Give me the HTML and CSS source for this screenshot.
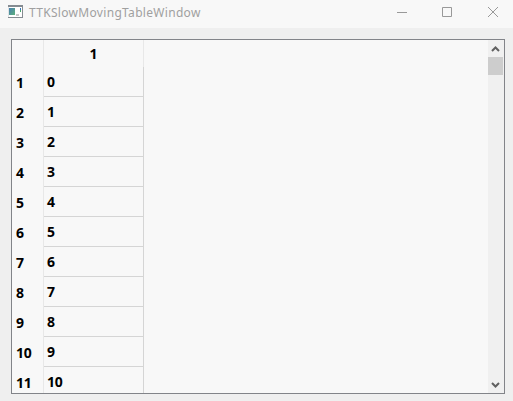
FILE: index.html
```
<!DOCTYPE html>
<html lang="en">
<head>
<meta charset="utf-8">
<title>TTKSlowMovingTableWindow</title>
<link rel="stylesheet" href="styles.css">
</head>
<body>
<header class="titlebar">
  <svg class="app-icon" width="15" height="13" viewBox="0 0 15 13">
    <defs><linearGradient id="g" x1="0" y1="0" x2="1" y2="1"><stop offset="0" stop-color="#4a7fb0"/><stop offset="1" stop-color="#5cb07c"/></linearGradient></defs>
    <path fill="#fff" d="M0 0h15v13H0z"/>
    <path fill="#858b91" d="M0 0h15v13H0v-1h14V2H0z"/>
    <path fill="#dfe3e6" d="M0 2h1v10H0z"/>
    <path fill="url(#g)" d="M1 3h6v7H1z"/>
    <path fill="#c8c8c8" d="M8 9h3v2H8z"/>
    <path fill="#3979b8" d="M12 3h1v2h-1z"/>
    <path fill="#48a56d" d="M12 5h1v2h-1z"/>
  </svg>
  <span class="title">TTKSlowMovingTableWindow</span>
  <svg class="control" width="45" height="28" viewBox="0 0 45 28"><path d="M16 12.5h10"/></svg>
  <svg class="control" width="45" height="28" viewBox="0 0 45 28"><path d="M16.5 7.5h9v9h-9z"/></svg>
  <svg class="control" width="45" height="28" viewBox="0 0 45 28"><path d="M17 7l10 10M27 7L17 17"/></svg>
</header>
<main class="frame">
  <div class="table">
    <div class="row head"><div class="index"></div><div class="cell">1</div></div>
    <div class="row"><div class="index">1</div><div class="cell">0</div></div>
    <div class="row"><div class="index">2</div><div class="cell">1</div></div>
    <div class="row"><div class="index">3</div><div class="cell">2</div></div>
    <div class="row"><div class="index">4</div><div class="cell">3</div></div>
    <div class="row"><div class="index">5</div><div class="cell">4</div></div>
    <div class="row"><div class="index">6</div><div class="cell">5</div></div>
    <div class="row"><div class="index">7</div><div class="cell">6</div></div>
    <div class="row"><div class="index">8</div><div class="cell">7</div></div>
    <div class="row"><div class="index">9</div><div class="cell">8</div></div>
    <div class="row"><div class="index">10</div><div class="cell">9</div></div>
    <div class="row"><div class="index">11</div><div class="cell">10</div></div>
  </div>
  <div class="scrollbar">
    <svg width="15" height="17" viewBox="0 0 15 17"><path d="M4 11l3.5-3.5L11 11"/></svg>
    <div class="thumb"></div>
    <svg class="down" width="15" height="17" viewBox="0 0 15 17"><path d="M4 7l3.5 3.5L11 7"/></svg>
  </div>
</main>
</body>
</html>
```
FILE: styles.css
```
* {
  box-sizing: border-box;
}

body {
  margin: 0;
  width: 513px;
  height: 401px;
  overflow: hidden;
  background: #efefef;
  font-family: "Noto Sans", "Open Sans", sans-serif;
}

svg {
  display: block;
  flex: none;
}

.titlebar {
  display: flex;
  height: 28px;
  padding-left: 8px;
  background: #f8f8f8;
}

.app-icon {
  margin-top: 5px;
  shape-rendering: crispEdges;
}

.title {
  flex: 1;
  margin-left: 6px;
  font-size: 12px;
  line-height: 26px;
  letter-spacing: 0.31px;
  color: #a0a0a0;
}

.control {
  fill: none;
  stroke: #999;
}

.control:last-child {
  margin-right: -3px;
}

.frame {
  display: flex;
  justify-content: space-between;
  width: 494px;
  height: 355px;
  margin: 11px 0 0 11px;
  border: 1px solid #828489;
  background: #f8f8f8;
  overflow: hidden;
}

.row {
  display: flex;
  height: 30px;
  font-size: 14px;
  font-weight: 700;
  line-height: 30px;
  letter-spacing: -0.2px;
  color: #000;
}

.index {
  width: 32px;
  padding: 1px 0 0 4px;
  border-right: 1px solid #e8e8e8;
}

.cell {
  width: 100px;
  padding-left: 3px;
  border-right: 1px solid #d5d5d5;
  border-bottom: 1px solid #d5d5d5;
}

.head {
  height: 27px;
  line-height: 28px;
}

.head .cell {
  padding: 0;
  border-bottom: 0;
  border-right-color: #e8e8e8;
  text-align: center;
}

.scrollbar {
  display: flex;
  flex-direction: column;
  width: 16px;
  background: #f0f0f0;
}

.scrollbar svg {
  fill: none;
  stroke: #606060;
  stroke-width: 2;
}

.thumb {
  width: 15px;
  height: 18px;
  background: #cdcdcd;
}

.down {
  margin-top: auto;
}
```
